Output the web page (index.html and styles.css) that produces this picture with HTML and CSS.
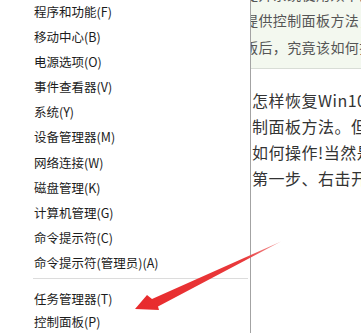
FILE: index.html
```html
<!DOCTYPE html>
<html lang="zh-CN">
<head>
    <meta charset="UTF-8">
    <meta name="viewport" content="width=device-width, initial-scale=1.0">
    <title>控制面板</title>
    <link rel="stylesheet" href="styles.css">
</head>
<body>
    <div class="screen">
        <!-- 左侧 Win+X 菜单 -->
        <ul class="menu">
            <li>程序和功能(F)</li>
            <li>移动中心(B)</li>
            <li>电源选项(O)</li>
            <li>事件查看器(V)</li>
            <li>系统(Y)</li>
            <li>设备管理器(M)</li>
            <li>网络连接(W)</li>
            <li>磁盘管理(K)</li>
            <li>计算机管理(G)</li>
            <li>命令提示符(C)</li>
            <li>命令提示符(管理员)(A)</li>
            <li class="sep"></li>
            <li class="short">任务管理器(T)</li>
            <li class="short">控制面板(P)</li>
        </ul>

        <!-- 右侧文章 -->
        <div class="article">
            <div class="summary">
                <p class="first">提升系统使用效率的方法</p>
                <p>提供控制面板方法，但是</p>
                <p>版后，究竟该如何操作</p>
            </div>
            <div class="content">
                <p>怎样恢复Win10</p>
                <p>制面板方法。但</p>
                <p>如何操作!当然是</p>
                <p>第一步、右击开</p>
            </div>
        </div>

        <!-- 红色箭头 -->
        <svg class="arrow" width="361" height="333" viewBox="0 0 361 333">
            <defs>
                <linearGradient id="red" x1="135" y1="309" x2="281" y2="242" gradientUnits="userSpaceOnUse">
                    <stop offset="0" stop-color="#e82a2c"/>
                    <stop offset="0.75" stop-color="#e93a3c"/>
                    <stop offset="1" stop-color="#f3a0a0"/>
                </linearGradient>
            </defs>
            <polygon fill="url(#red)" points="135,309 147,295 152,299 281,241.5 158,306.5 159,310"/>
        </svg>
    </div>
</body>
</html>
```

FILE: styles.css
```css
* {
    margin: 0;
    padding: 0;
    box-sizing: border-box;
}

body {
    background: #fff;
    font-family: 'Noto Sans CJK SC', 'Microsoft YaHei', sans-serif;
    overflow: hidden;
}

.screen {
    position: relative;
    display: flex;
    width: 361px;
    height: 333px;
    overflow: hidden;
}

/* 菜单 */
.menu {
    list-style: none;
    width: 251px;
    flex-shrink: 0;
    border-right: 1px solid #a3a3a3;
    margin-top: -1.5px;
    color: #1c1c1c;
    font-size: 12.5px;
}

.menu li {
    height: 25.2px;
    line-height: 25.2px;
    padding-left: 34px;
    white-space: nowrap;
}

.menu li.sep {
    height: 1px;
    margin: 2px 2px 8px 33px;
    padding: 0;
    background: #dcdcdc;
}

.menu li.short {
    height: 23.5px;
    line-height: 23.5px;
}

/* 文章 */
.article {
    flex: 1;
    overflow: hidden;
}

.summary {
    background: #f3f8ef;
    border-bottom: 1px solid #d8ddd6;
    margin-top: -17px;
    padding-bottom: 7.5px;
    color: #555;
    font-size: 14px;
    letter-spacing: 0.4px;
}

.summary p {
    line-height: 27px;
    white-space: nowrap;
    text-indent: -7px;
}

.summary p.first {
    line-height: 23.5px;
}

.content {
    margin-top: 18px;
    color: #333;
    font-size: 16px;
    letter-spacing: 0.5px;
}

.content p {
    line-height: 26px;
    white-space: nowrap;
    padding-left: 1px;
}

/* 箭头覆盖层 */
.arrow {
    position: absolute;
    top: 0;
    left: 0;
    pointer-events: none;
}
```
